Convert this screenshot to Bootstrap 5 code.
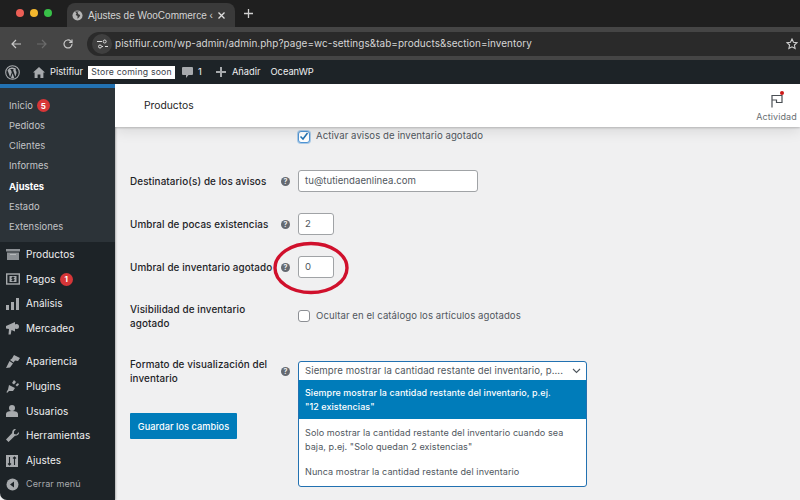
<!DOCTYPE html>
<html lang="es">
<head>
<meta charset="utf-8">
<title>Ajustes de WooCommerce</title>
<link href="https://cdn.jsdelivr.net/npm/bootstrap@5.3.0/dist/css/bootstrap.min.css" rel="stylesheet">
<style>
html,body{margin:0;height:500px;overflow:hidden;background:#f0f0f1}
body{font-family:"Inter","Liberation Sans",sans-serif;font-size:10.5px;color:#3c434a;width:800px;position:relative}
.tabbar{height:27px;background:#1f1f1f;padding-left:67px}
.dot{width:8px;height:8px;border-radius:50%}
.lights{position:absolute;left:16px;top:9px;gap:6px}
.chrometab{width:168px;height:24px;margin-top:3px;background:#3a3a3a;border-radius:8px 8px 0 0;color:#d4d4d4;padding:0 9px 0 5px;font-family:"Liberation Sans",sans-serif;font-size:10px}
.chrometab .ttl{white-space:nowrap;margin-left:1px}
.toolbar{height:33px;background:#454545;padding:0 0 0 10px;overflow:hidden}
.urlbar{flex:1;height:24px;background:#2a2a2a;border-radius:12px 0 0 12px;margin-left:13px;color:#d6d6d6;font-size:9.95px;padding:0 2px 0 5px;letter-spacing:.05px}
.urlicon{width:20px;height:20px;border-radius:50%;background:#3f3f3f;margin-right:3px}
.adminbar{height:24px;background:#1d2327;color:#f0f0f1;font-size:9.3px;padding-left:5px}
.storepill{background:#fff;color:#3c434a;width:87px;text-align:center;height:13px;line-height:13px;font-size:8.7px;letter-spacing:.2px;margin:0 7px 0 5px}
.wpbody{height:416px}
.sidebar{width:115px;background:#1d2327;border-top:4px solid #2271b1;border-bottom-left-radius:7px;flex:none;color:#f0f0f1;box-shadow:1px 0 2px rgba(0,0,0,.25)}
.submenu{background:#2c3338;height:154px;padding-top:7.500px;color:#c3c4c7;font-size:9.4px}
.subitem{height:20.3px;padding-left:9px;display:flex;align-items:center;letter-spacing:.05px}
.subitem.current{color:#fff;font-weight:700}
.countpill{background:#d63638;color:#fff;border-radius:50%;width:13px;height:13px;font-size:8px;font-weight:700;display:inline-flex;align-items:center;justify-content:center;margin-left:4px}
.menuitem{height:24.8px;display:flex;align-items:center;font-size:10px;letter-spacing:.05px}
.menuicon{width:26px;padding-left:6px;display:flex;align-items:center;flex:none}
.menugap{height:8px}
.closeitem{color:#a7aaad;font-size:9px;letter-spacing:.1px;height:22px}
.mainarea{position:relative;overflow:hidden}
.wcheader{height:43px;background:#fff;padding:0 3px 0 29px;font-size:10.3px;color:#1e1e1e;box-shadow:0 1px 2px rgba(0,0,0,.2),0 4px 14px rgba(0,0,0,.1);position:relative;z-index:2}
.activity{color:#6a6f73;font-size:9px;letter-spacing:.1px;line-height:1;width:41px;position:relative;padding-top:3px}
.redpt{position:absolute;top:0;right:13px;width:4px;height:4px;border-radius:50%;background:#cc1818}
.formrow{padding-left:15px;display:flex}
.labelcell{width:151px;color:#1d2327;font-weight:500;line-height:14px;font-size:9.9px;letter-spacing:.1px;flex:none}
.helpcell{width:17px;flex:none;display:flex}
.helpicon{width:9px;height:9px;border-radius:50%;background:#646970;color:#f0f0f1;font-size:7px;font-weight:700;line-height:9px;text-align:center;display:block}
.fieldtext{background:#fff;border:1px solid #a0a3a6;border-radius:3px;height:22px;color:#50575e;padding:0 6px;display:flex;align-items:center;font-size:9.6px;letter-spacing:.05px}
.wpcheck{width:12px;height:12px;background:#fff;border:1px solid #8c8f94;border-radius:3px;margin-right:6px;flex:none;display:flex;align-items:center;justify-content:center}
.wpcheck.focused{border-color:#4f94d4;box-shadow:0 0 0 1px #a9c9e6}
.checklabel{color:#50575e;font-size:9.6px;letter-spacing:.06px}
.selectbox{width:289px;border:1px solid #2271b1;border-radius:3px;background:#fff;position:absolute;left:183px;top:277px;z-index:3;font-size:9.05px;letter-spacing:.08px;overflow:hidden}
.selecthead{height:18px;padding:0 5px 0 6px;color:#50575e;white-space:nowrap;font-size:9.6px}
.selectopt{padding:6px 6px;line-height:14px;color:#50575e}
.selectopt.active-opt{background:#007cba;color:#fff;font-weight:500;height:39px;white-space:nowrap;font-size:8.95px}
.savebtn{background:#007cba;color:#fff;border-radius:1px;width:107px;height:26px;font-size:9.2px;font-weight:500;letter-spacing:.05px;margin-left:15px;padding-top:1px!important}
.ring{position:absolute;left:157px;top:157px;z-index:4;pointer-events:none}
</style>
</head>
<body>
<div class="tabbar d-flex align-items-start">
  <div class="lights d-flex">
    <span class="dot" style="background:#ec5f56"></span><span class="dot" style="background:#f4b82e"></span><span class="dot" style="background:#38c148"></span>
  </div>
  <div class="chrometab d-flex align-items-center">
    <svg width="11" height="11" viewBox="0 0 12 12" class="me-1 flex-shrink-0"><circle cx="6" cy="6" r="5.500" fill="#b5b5b5"/><path d="M3 1.500l2 2-1 2 2 1v3l2-2 1-2-2-1-1-2 2-1z" fill="#3a3a3a"/></svg>
    <span class="ttl">Ajustes de WooCommerce ‹</span>
    <svg width="9" height="9" viewBox="0 0 9 9" class="ms-auto flex-shrink-0"><path d="M1.500 1.500l6 6M7.500 1.500l-6 6" stroke="#e0e0e0" stroke-width="1.300"/></svg>
  </div>
  <svg width="9" height="9" viewBox="0 0 9 9" style="margin:9px 0 0 9px"><path d="M4.500 0v9M0 4.500h9" stroke="#d0d0d0" stroke-width="1.300"/></svg>
</div>
<div class="toolbar d-flex align-items-center">
  <svg width="12" height="12" viewBox="0 0 12 12"><path d="M11 6H2M6 2L2 6l4 4" fill="none" stroke="#c8c8c8" stroke-width="1.200"/></svg>
  <svg width="12" height="12" viewBox="0 0 12 12" style="margin-left:14px"><path d="M1 6h9M6 2l4 4-4 4" fill="none" stroke="#6c6c6c" stroke-width="1.200"/></svg>
  <svg width="12" height="12" viewBox="0 0 12 12" style="margin-left:14px"><path d="M10 6a4 4 0 1 1-1.200-2.900L10 4.300V1.500M10 4.300H7.200" fill="none" stroke="#c8c8c8" stroke-width="1.200"/></svg>
  <div class="urlbar d-flex align-items-center">
    <span class="urlicon d-flex align-items-center justify-content-center">
      <svg width="11" height="10" viewBox="0 0 11 10"><path d="M0 2.500h5M8 7.500h3" stroke="#dcdcdc" stroke-width="1.100"/><circle cx="7.700" cy="2.500" r="1.500" fill="none" stroke="#dcdcdc"/><circle cx="3" cy="7.500" r="1.500" fill="none" stroke="#dcdcdc"/><path d="M5 7.500h1" stroke="#dcdcdc"/></svg>
    </span>
    <span>pistifiur.com/wp-admin/admin.php?page=wc-settings&amp;tab=products&amp;section=inventory</span>
    <svg width="12" height="12" viewBox="0 0 12 12" class="ms-auto"><path d="M6 1l1.500 3.200 3.500.4-2.600 2.400.7 3.500L6 8.800l-3.100 1.700.7-3.500L1 4.600l3.500-.4z" fill="none" stroke="#d0d0d0" stroke-width="1.100"/></svg>
  </div>
</div>
<div class="adminbar d-flex align-items-center">
  <svg width="15" height="15" viewBox="0 0 15 15"><circle cx="7.500" cy="7.500" r="6.800" fill="none" stroke="#a7aaad" stroke-width="1.100"/><path d="M2.500 5.200l2.600 7 1.700-5-1-2.600h-.9V4h4v.6h-1l2.500 7.200 1-3.400c.4-1.600-.2-2.500-.7-3.200-.3-.6 0-1.200.7-1.200A5.900 5.900 0 0 0 2.500 5.200zM7.600 8.200l-1.600 4.900c1 .4 2.200.4 3.300 0z" fill="#a7aaad"/></svg>
  <svg width="12" height="11" viewBox="0 0 12 11" style="margin-left:13px"><path d="M6 0L0 5.500h1.600V11h3V7.400h2.800V11h3V5.500H12z" fill="#a7aaad"/></svg>
  <span style="margin-left:5px">Pistifiur</span>
  <span class="storepill">Store coming soon</span>
  <svg width="11" height="11" viewBox="0 0 11 11"><path d="M1 0h9a1 1 0 0 1 1 1v6a1 1 0 0 1-1 1H6.500L4 11V8H1a1 1 0 0 1-1-1V1a1 1 0 0 1 1-1z" fill="#a7aaad"/></svg>
  <span style="margin-left:5px">1</span>
  <svg width="10" height="10" viewBox="0 0 10 10" style="margin-left:14px"><path d="M5 0v10M0 5h10" stroke="#a7aaad" stroke-width="2"/></svg>
  <span style="margin-left:6px">Añadir</span>
  <span style="margin-left:10px">OceanWP</span>
</div>
<div class="wpbody d-flex">
  <nav class="sidebar">
    <div class="submenu">
      <div class="subitem">Inicio<span class="countpill">5</span></div>
      <div class="subitem">Pedidos</div>
      <div class="subitem">Clientes</div>
      <div class="subitem">Informes</div>
      <div class="subitem current">Ajustes</div>
      <div class="subitem">Estado</div>
      <div class="subitem">Extensiones</div>
    </div>
    <div class="menuitem"><span class="menuicon"><svg width="14" height="11" viewBox="0 0 14 11"><path d="M0 0h14v2.500H0zM1 3.500h12V11H1z" fill="#8c9094"/><path d="M4 5.500h6" stroke="#b5b8ba"/></svg></span>Productos</div>
    <div class="menuitem"><span class="menuicon"><svg width="14" height="12" viewBox="0 0 14 12"><rect x=".7" y="1" width="12.600" height="10" fill="none" stroke="#a7aaad" stroke-width="1.400"/><rect x="3.500" y="3" width="7" height="6" fill="#a7aaad"/><path d="M8.500 4.500H6v1.500h2v1.500H5.500M7 3.500v5" fill="none" stroke="#1d2327"/></svg></span>Pagos<span class="countpill">1</span></div>
    <div class="menuitem"><span class="menuicon"><svg width="13" height="12" viewBox="0 0 13 12"><path d="M0 7h3v5H0zM5 4h3v8H5zM10 0h3v12h-3z" fill="#a7aaad"/></svg></span>Análisis</div>
    <div class="menuitem"><span class="menuicon"><svg width="13" height="13" viewBox="0 0 13 13"><path d="M0 4l9-4v9.500L5.500 8l-.8 4.500H2.500L3 7 0 6.500z" fill="#a7aaad"/><circle cx="10.500" cy="4.500" r="2.500" fill="#a7aaad"/></svg></span>Mercadeo</div>
    <div class="menugap"></div>
    <div class="menuitem"><span class="menuicon"><svg width="14" height="13" viewBox="0 0 14 13"><path d="M8 0l6 3-2 3-3-.5-1.500 2L4 5l2-1.500zM3.500 6l3.500 2.500L4 12.500 0 13z" fill="#a7aaad"/></svg></span>Apariencia</div>
    <div class="menuitem"><span class="menuicon"><svg width="13" height="13" viewBox="0 0 13 13"><path d="M8 0L6 3l2 1.500L10 2zM12 3L9.500 5 11 6.500l2-2zM3 5l6 3-2 3H3L1 13 .5 12 2 9.500z" fill="#a7aaad"/></svg></span>Plugins</div>
    <div class="menuitem"><span class="menuicon"><svg width="12" height="12" viewBox="0 0 12 12"><circle cx="6" cy="3" r="3" fill="#a7aaad"/><path d="M0 12V9c0-2 2-3 6-3s6 1 6 3v3z" fill="#a7aaad"/></svg></span>Usuarios</div>
    <div class="menuitem"><span class="menuicon"><svg width="13" height="13" viewBox="0 0 13 13"><path d="M13 3L10.500 5.500 8 5V2.500L10 0c-2-.5-4 1-3.800 4L0 10.500 2.500 13 9 6.800c2.500.2 4.500-1.800 4-3.800z" fill="#a7aaad"/></svg></span>Herramientas</div>
    <div class="menuitem"><span class="menuicon"><svg width="12" height="12" viewBox="0 0 12 12"><rect width="12" height="12" fill="#a7aaad"/><path d="M3.500 2v8M2 8.500L3.500 10 5 8.500M8.500 10V2M7 3.500L8.500 2 10 3.500" fill="none" stroke="#1d2327" stroke-width="1.100"/></svg></span>Ajustes</div>
    <div class="menuitem closeitem"><span class="menuicon"><svg width="13" height="13" viewBox="0 0 13 13"><circle cx="6.500" cy="6.500" r="6" fill="#a7aaad"/><path d="M8 3.500v6L4 6.500z" fill="#1d2327"/></svg></span>Cerrar menú</div>
  </nav>
  <main class="mainarea flex-grow-1">
    <div class="wcheader d-flex align-items-center justify-content-between">
      <span>Productos</span>
      <div class="activity d-flex flex-column align-items-center gap-1">
        <span class="redpt"></span>
        <svg width="12" height="14" viewBox="0 0 12 14"><path d="M1 13.500V1.500h10v7H5.500V6H1" fill="none" stroke="#4a4f54" stroke-width="1.200"/></svg>
        <span>Actividad</span>
      </div>
    </div>
    <div class="formrow" style="height:19px;padding-top:1px">
      <div class="labelcell"></div><div class="helpcell"></div>
      <div class="d-flex align-items-center" style="margin-top:-1px">
        <span class="wpcheck focused"><svg width="10" height="9" viewBox="0 0 10 9"><path d="M1.500 4.500L4 7l4.500-6" fill="none" stroke="#2271b1" stroke-width="1.500"/></svg></span>
        <span class="checklabel">Activar avisos de inventario agotado</span>
      </div>
    </div>
    <div class="formrow align-items-center" style="margin-top:24px;height:22px">
      <div class="labelcell">Destinatario(s) de los avisos</div>
      <div class="helpcell"><span class="helpicon">?</span></div>
      <div class="fieldtext" style="width:180px">tu@tutiendaenlinea.com</div>
    </div>
    <div class="formrow align-items-center" style="margin-top:21px;height:22px">
      <div class="labelcell">Umbral de pocas existencias</div>
      <div class="helpcell"><span class="helpicon">?</span></div>
      <div class="fieldtext" style="width:36px">2</div>
    </div>
    <div class="formrow align-items-center" style="margin-top:21px;height:22px">
      <div class="labelcell">Umbral de inventario agotado</div>
      <div class="helpcell"><span class="helpicon">?</span></div>
      <div class="fieldtext" style="width:36px">0</div>
    </div>
    <div class="formrow" style="margin-top:24px;height:28px">
      <div class="labelcell">Visibilidad de inventario agotado</div>
      <div class="helpcell"></div>
      <div class="d-flex align-items-center align-self-center">
        <span class="wpcheck"></span><span class="checklabel">Ocultar en el catálogo los artículos agotados</span>
      </div>
    </div>
    <div class="formrow align-items-center" style="margin-top:27px;height:28px">
      <div class="labelcell">Formato de visualización del inventario</div>
      <div class="helpcell"><span class="helpicon">?</span></div>
    </div>
    <div class="selectbox">
      <div class="selecthead d-flex align-items-center justify-content-between">
        <span>Siempre mostrar la cantidad restante del inventario, p....</span>
        <svg width="9" height="6" viewBox="0 0 9 6"><path d="M1 1l3.500 3.500L8 1" fill="none" stroke="#50575e" stroke-width="1.100"/></svg>
      </div>
      <div class="selectopt active-opt">Siempre mostrar la cantidad restante del inventario, p.ej.<br>"12 existencias"</div>
      <div class="selectopt" style="padding-bottom:5px;padding-top:7px">Solo mostrar la cantidad restante del inventario cuando sea baja, p.ej. "Solo quedan 2 existencias"</div>
      <div class="selectopt" style="padding-top:6px;padding-bottom:7px">Nunca mostrar la cantidad restante del inventario</div>
    </div>
    <button type="button" class="btn savebtn d-flex align-items-center justify-content-center p-0 border-0" style="margin-top:28px">Guardar los cambios</button>
    <svg class="ring" width="80" height="56" viewBox="0 0 80 56"><ellipse cx="39" cy="27" rx="36" ry="24.500" fill="none" stroke="#d0102c" stroke-width="3.400"/></svg>
  </main>
</div>
<script src="https://cdn.jsdelivr.net/npm/bootstrap@5.3.0/dist/js/bootstrap.bundle.min.js"></script>
</body>
</html>
